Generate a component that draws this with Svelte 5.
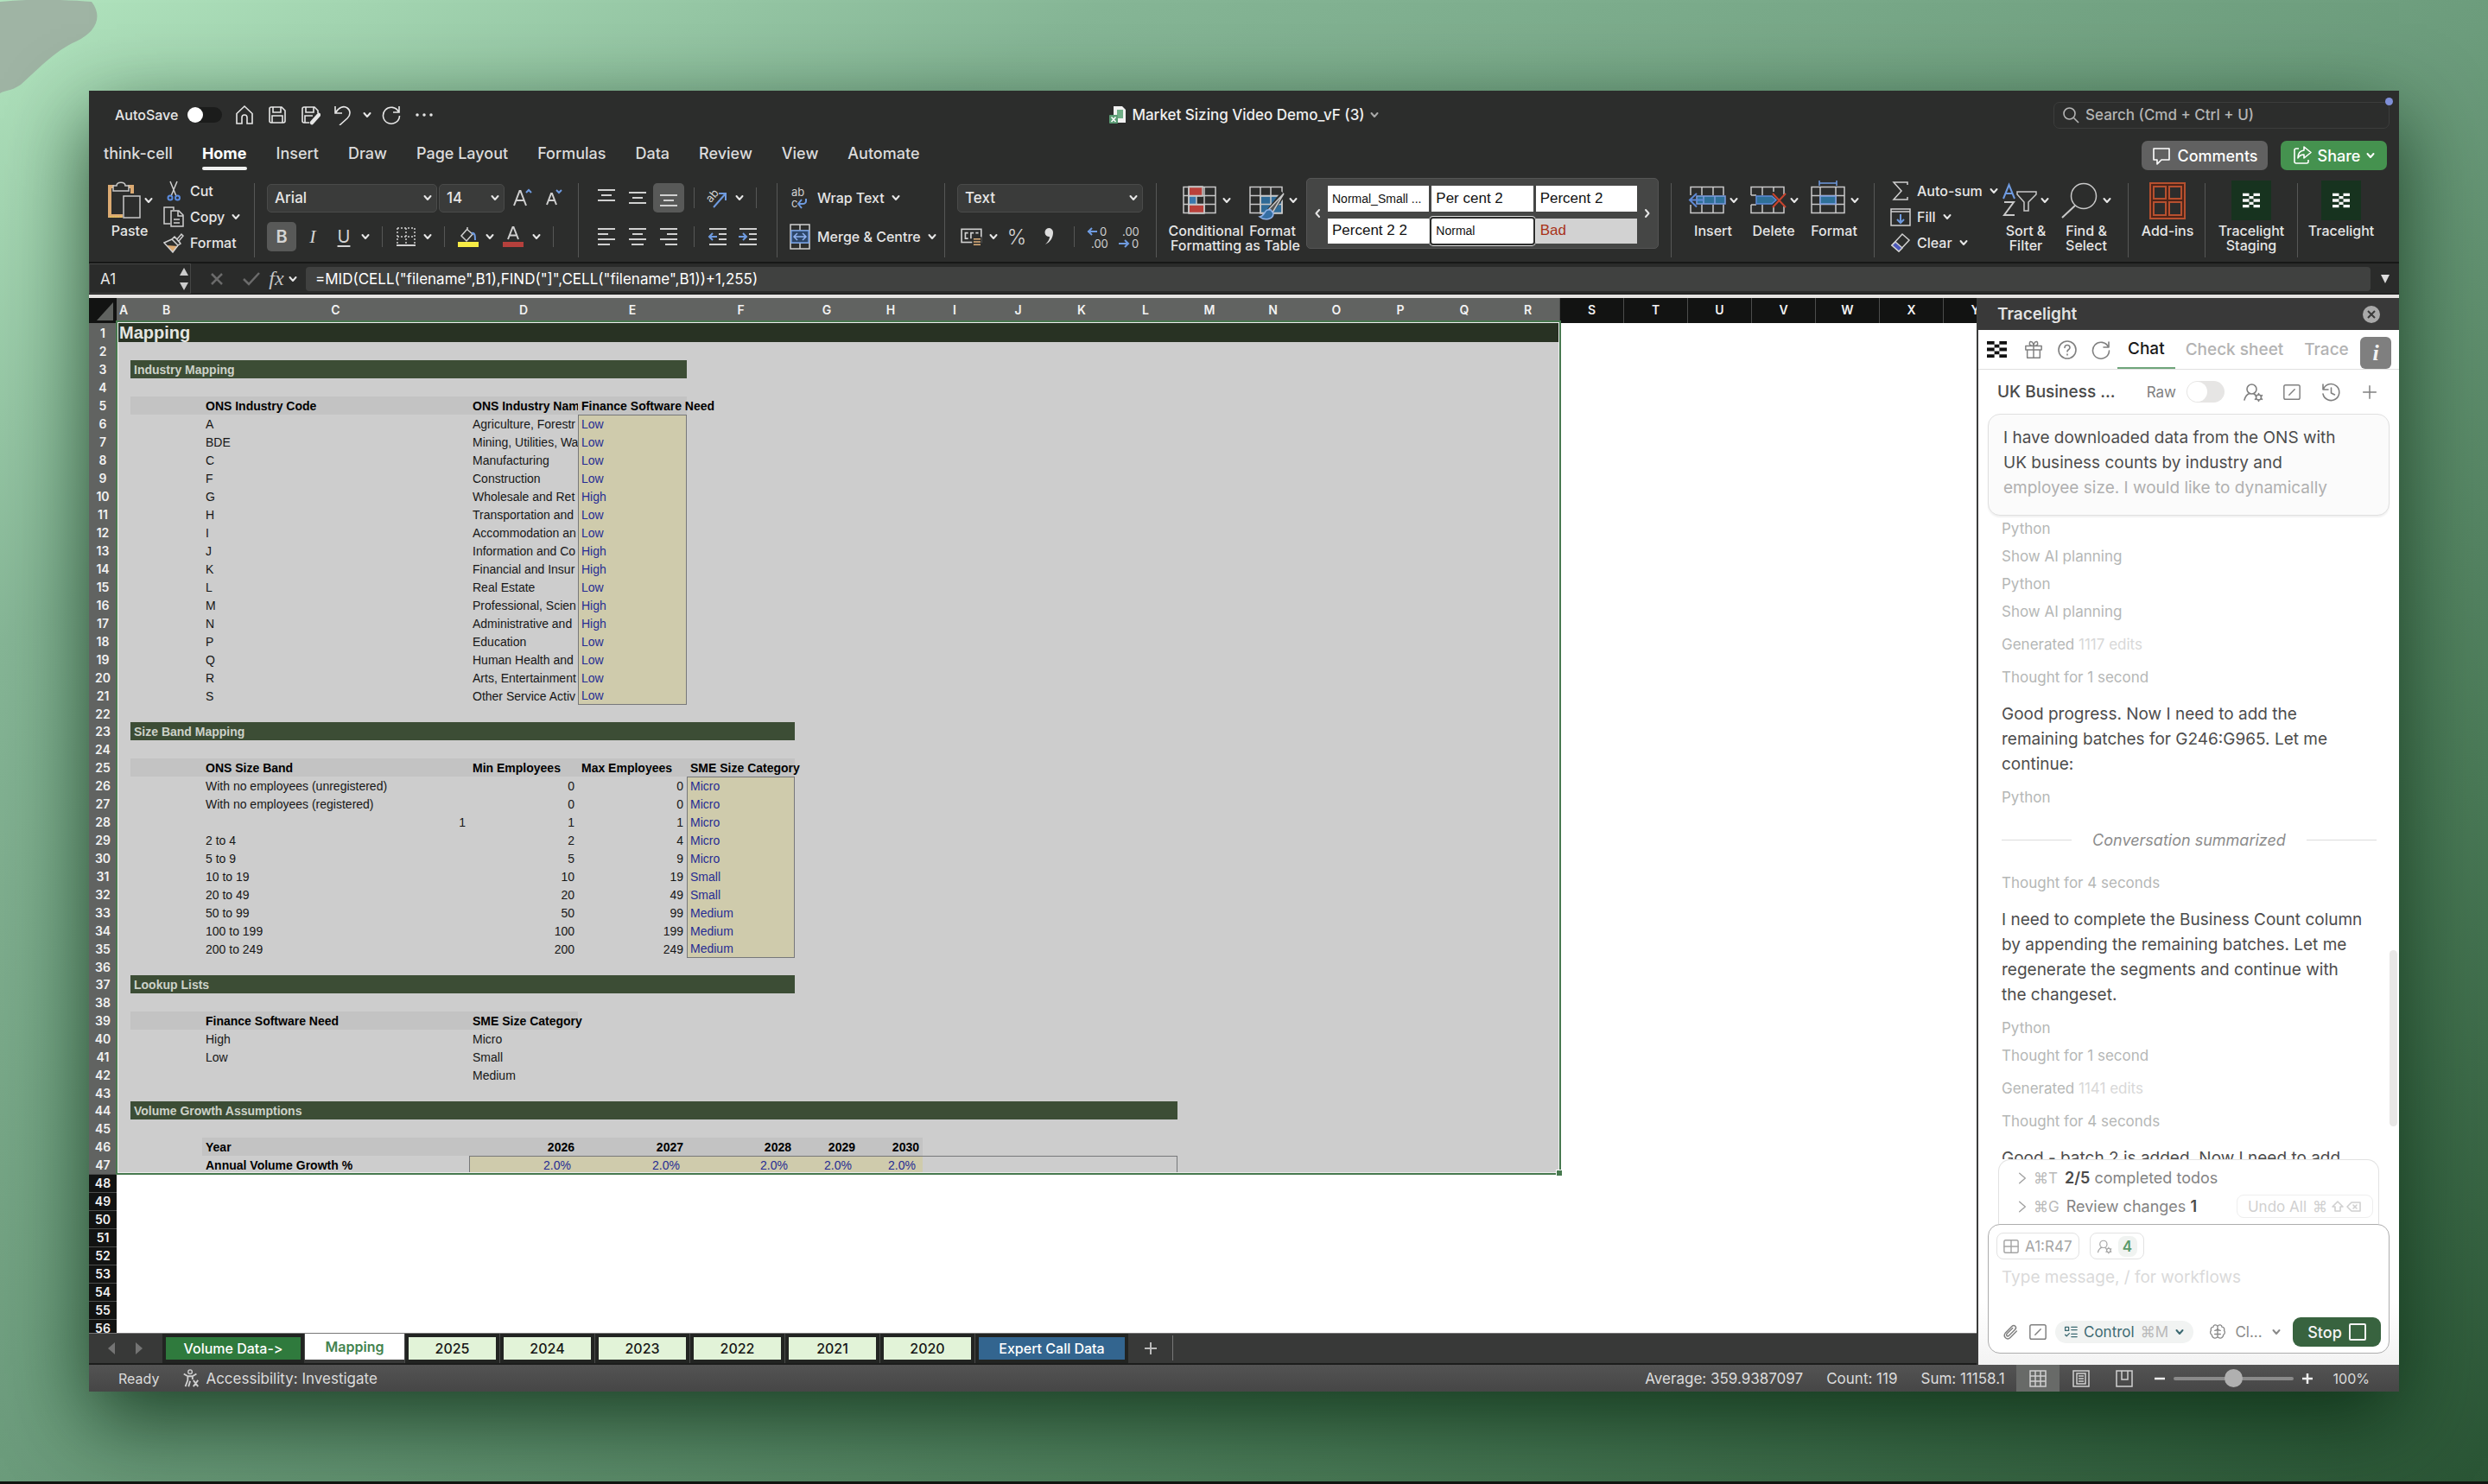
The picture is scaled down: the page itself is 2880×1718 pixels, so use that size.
<script>
  const letters = 'ABCDEFGHIJKLMNOPQRSTUVWXY'.split('');
  const narrow = ['J', 'N', 'R'];
  const colClass = (l) => ('ABCDEF'.includes(l) ? 'col-' + l.toLowerCase() : narrow.includes(l) ? 'col-slim' : 'col-std');

  const rows = [];
  for (let i = 1; i <= 56; i++) rows.push({ n: i, cells: {} });
  const put = (row, col, text, cls = '') => (rows[row - 1].cells[col] = { text, cls });
  const fill = (row, from, to, cls) => {
    for (let i = letters.indexOf(from); i <= letters.indexOf(to); i++) {
      const l = letters[i];
      const old = rows[row - 1].cells[l];
      put(row, l, old ? old.text : '', ((old ? old.cls : '') + ' ' + cls).trim());
    }
  };

  put(1, 'A', 'Mapping', 'sheet-title');
  fill(1, 'A', 'R', 'top-bar');

  const section = (row, text, to) => {
    put(row, 'B', text, 'bold');
    fill(row, 'B', to, 'section');
  };
  section(3, 'Industry Mapping', 'E');
  section(23, 'Size Band Mapping', 'F');
  section(37, 'Lookup Lists', 'F');
  section(44, 'Volume Growth Assumptions', 'L');

  put(5, 'C', 'ONS Industry Code', 'bold');
  put(5, 'D', 'ONS Industry Nam', 'bold clip');
  put(5, 'E', 'Finance Software Need', 'bold');
  fill(5, 'B', 'E', 'band');

  const industries = [
    ['A', 'Agriculture, Forestr', 'Low'],
    ['BDE', 'Mining, Utilities, Wa', 'Low'],
    ['C', 'Manufacturing', 'Low'],
    ['F', 'Construction', 'Low'],
    ['G', 'Wholesale and Ret', 'High'],
    ['H', 'Transportation and', 'Low'],
    ['I', 'Accommodation an', 'Low'],
    ['J', 'Information and Co', 'High'],
    ['K', 'Financial and Insur', 'High'],
    ['L', 'Real Estate', 'Low'],
    ['M', 'Professional, Scien', 'High'],
    ['N', 'Administrative and', 'High'],
    ['P', 'Education', 'Low'],
    ['Q', 'Human Health and', 'Low'],
    ['R', 'Arts, Entertainment', 'Low'],
    ['S', 'Other Service Activ', 'Low']
  ];
  industries.forEach(([code, name, need], i) => {
    const edge = i === 0 ? ' box-top' : i === industries.length - 1 ? ' box-bottom' : '';
    put(6 + i, 'C', code);
    put(6 + i, 'D', name, 'clip');
    put(6 + i, 'E', need, 'entry box-side' + edge);
  });

  put(25, 'C', 'ONS Size Band', 'bold');
  put(25, 'D', 'Min Employees', 'bold');
  put(25, 'E', 'Max Employees', 'bold');
  put(25, 'F', 'SME Size Category', 'bold');
  fill(25, 'B', 'F', 'band');
  const bands = [
    ['With no employees (unregistered)', '0', '0', 'Micro'],
    ['With no employees (registered)', '0', '0', 'Micro'],
    ['1', '1', '1', 'Micro'],
    ['2 to 4', '2', '4', 'Micro'],
    ['5 to 9', '5', '9', 'Micro'],
    ['10 to 19', '10', '19', 'Small'],
    ['20 to 49', '20', '49', 'Small'],
    ['50 to 99', '50', '99', 'Medium'],
    ['100 to 199', '100', '199', 'Medium'],
    ['200 to 249', '200', '249', 'Medium']
  ];
  bands.forEach(([band, min, max, cat], i) => {
    const edge = i === 0 ? ' box-top' : i === bands.length - 1 ? ' box-bottom' : '';
    put(26 + i, 'C', band, band === '1' ? 'num' : '');
    put(26 + i, 'D', min, 'num');
    put(26 + i, 'E', max, 'num');
    put(26 + i, 'F', cat, 'entry box-side' + edge);
  });

  put(39, 'C', 'Finance Software Need', 'bold');
  put(39, 'D', 'SME Size Category', 'bold');
  fill(39, 'B', 'D', 'band');
  put(40, 'C', 'High');
  put(40, 'D', 'Micro');
  put(41, 'C', 'Low');
  put(41, 'D', 'Small');
  put(42, 'D', 'Medium');

  put(46, 'C', 'Year', 'bold');
  put(47, 'C', 'Annual Volume Growth %', 'bold');
  ['D', 'E', 'F', 'G', 'H'].forEach((l, i) => {
    put(46, l, String(2026 + i), 'bold num');
    put(47, l, '2.0%', 'entry percent box-top' + (l === 'D' ? ' box-left' : ''));
  });
  fill(46, 'C', 'H', 'band');
  fill(47, 'I', 'L', 'box-top');
  fill(47, 'L', 'L', 'box-right');

  const spacer = [22, 36, 43];
  const menuTabs = ['think-cell', 'Home', 'Insert', 'Draw', 'Page Layout', 'Formulas', 'Data', 'Review', 'View', 'Automate'];
  const years = ['2025', '2024', '2023', '2022', '2021', '2020'];
  const styles = [
    ['Normal_Small ...', 'small'],
    ['Per cent 2', ''],
    ['Percent 2', ''],
    ['Percent 2 2', ''],
    ['Normal', 'small chosen'],
    ['Bad', 'bad']
  ];
  let autosave = $state(false);
  let raw = $state(false);
</script>

{#snippet chev()}
  <svg class="chev" viewBox="0 0 12 12" width="12" height="12"><path d="M2.500 4l3.500 4 3.500-4" /></svg>
{/snippet}

{#snippet grid(kind)}
  <svg class="big" viewBox="0 0 44 46" width="44" height="46">
    {#if kind === 'cf'}
      <rect x="9" y="7" width="16" height="11" fill="#b9413b" /><rect x="9" y="18" width="9" height="10" fill="#3b78ad" /><rect x="9" y="28" width="18" height="10" fill="#b9413b" />
      <path d="M3 7.500h37v30H3zM3 17.500h37M3 27.500h37M9 7v31M27 7v31" />
    {:else if kind === 'ft'}
      <rect x="15" y="18" width="25" height="20" fill="#2f6a96" />
      <path d="M3 7.500h37v30H3zM3 17.500h37M3 27.500h37M15 7v31M27 7v31" />
      <path d="M42 15L26 35" stroke="#2c2d2c" stroke-width="7" /><path d="M42 15L25 33l4 4z" fill="#555" />
      <path d="M27 34c-8-2-6 7-13 8 6 5 16 3 16-4z" fill="#356ea3" stroke="#8fb2e8" />
    {:else if kind === 'insert'}
      <path d="M3 17V7.500h38V17M16 7v10M29 7v10M3 28v9.500h38V28M16 28v10M29 28v10" />
      <rect x="10" y="18" width="33" height="9" fill="#2f7098" stroke="#7d9de0" /><path d="M18 18v9M31 18v9" stroke="#7d9de0" /><path d="M18 22.500H2M10 15l-8 7.500 8 8" stroke="#5f8ad6" stroke-width="2" />
    {:else if kind === 'delete'}
      <path d="M3 17V7.500h38V16M16 7v10M29 7v6M3 17h6M3 28h6M3 28v9.500h38V30M16 28v10M29 30v8" />
      <path d="M9 18h18l5 4.500-5 4.500H9z" fill="#2f7098" stroke="#5f8ad6" /><path d="M28 15l15 16M43 15L28 31" stroke="#c9452f" stroke-width="2" />
    {:else}
      <path d="M3 7.500h38v30H3zM3 17.500h38M3 27.500h38M13 7v31M31 7v31" />
      <rect x="13" y="18" width="18" height="9" fill="#2f7098" stroke="#7d9de0" /><path d="M12 3h20M12 0v6M32 0v6" stroke="#6f9be0" />
    {/if}
  </svg>
{/snippet}

{#snippet lines(offs)}
  <svg class="ic" viewBox="0 0 24 24" width="24" height="24">
    <path class="l2" d={offs} />
  </svg>
{/snippet}

{#snippet checker(size)}
  <svg viewBox="0 0 24 20" width={size} height={size} class="checker">
    <path d="M0 0h9v4H0zM15 0h9v4h-9zM9 4h6v4H9zM0 8h9v4H0zM15 8h9v4h-9zM9 12h6v4H9zM0 16h9v4H0zM15 16h9v4h-9z" />
  </svg>
{/snippet}

{#snippet person()}
  <svg class="pi" viewBox="0 0 24 24" width="24" height="24"><circle cx="10.500" cy="8.500" r="5.500" /><path d="M2 21c1-4 3-6.500 6-7.500M13 14l1.500.800" /><circle cx="18.500" cy="18" r="3" /><path d="M18.500 13.500v1.500M18.500 21v1.500M14.500 15.700l1.300.800M21.200 19.500l1.300.800M14.500 20.300l1.300-.800M21.200 16.500l1.300-.800" /></svg>
{/snippet}

{#snippet slash()}
  <svg class="pi" viewBox="0 0 24 24" width="22" height="22"><rect x="2" y="3" width="20" height="18" rx="2" /><path d="M8.500 15.500l7-7" /></svg>
{/snippet}

<div class="page">
  <svg class="smudge" viewBox="0 0 114 110" width="114" height="110"><path d="M0 2c40-4 80-2 106 0 14 18 4 36-18 46C64 58 40 84 24 98 12 106 6 104 0 108z" /></svg>

  <main class="window">
    <header class="titlebar">
      <div class="quick">
        <label class="autosave">AutoSave<input type="checkbox" bind:checked={autosave} /><span class="knob"></span></label>
        <button aria-label="Home"><svg viewBox="0 0 24 24" width="24" height="24"><path d="M3 10.500L12 2l9 8.500V22h-6v-7a3 3 0 0 0-6 0v7H3z" /></svg></button>
        <button aria-label="Save"><svg viewBox="0 0 24 24" width="24" height="24"><path d="M3 5a2 2 0 0 1 2-2h12l4 4v12a2 2 0 0 1-2 2H5a2 2 0 0 1-2-2zM7 3v6h9V3M6 21v-8h12v8" /></svg></button>
        <button aria-label="Save as"><svg viewBox="0 0 24 24" width="24" height="24"><path d="M11 21H5a2 2 0 0 1-2-2V5a2 2 0 0 1 2-2h12l4 4v3M7 3v6h9V3M6 21v-8h9" /><path d="M22 12l-8 9" stroke-width="4.500" stroke-linecap="round" /></svg></button>
        <button aria-label="Undo"><svg viewBox="0 0 24 24" width="24" height="24"><path d="M3 2v8h8M3.500 9.500C7 3 13 1 17 4s4 8 0 12l-9 8" /></svg></button>
        <button aria-label="Undo history" class="slim">{@render chev()}</button>
        <button aria-label="Redo"><svg viewBox="0 0 24 24" width="24" height="24"><path d="M21 2v7h-7M20.500 8.500A9.500 9.500 0 1 0 21.500 13" /></svg></button>
        <button aria-label="More commands"><svg viewBox="0 0 24 24" width="24" height="24"><path d="M4 12h.010M12 12h.010M20 12h.010" stroke-width="3.500" stroke-linecap="round" /></svg></button>
      </div>
      <div class="doc">
        <svg viewBox="0 0 22 22" width="22" height="22"><path d="M6 1h10l4 4v15H6z" fill="#f2f2f2" /><path d="M10 5h7v10h-7z" fill="#6fae86" /><rect x="1" y="11" width="10" height="10" rx="1" fill="#5a9c74" /><path d="M3.500 13.500l5 5.500M8.500 13.500l-5 5.500" stroke="#fff" stroke-width="1.500" /></svg>
        <span>Market Sizing Video Demo_vF (3)</span>
        {@render chev()}
      </div>
      <label class="search">
        <svg viewBox="0 0 20 20" width="20" height="20"><circle cx="8.500" cy="8.500" r="6.500" /><path d="M13.500 13.500L19 19" /></svg>
        <input type="text" placeholder="Search (Cmd + Ctrl + U)" aria-label="Search" />
        <span class="dot"></span>
      </label>
    </header>

    <nav class="menu">
      {#each menuTabs as t}
        <button class:active={t === 'Home'}>{t}</button>
      {/each}
      <div class="menu-actions">
        <button class="pill grey"><svg viewBox="0 0 24 24" width="24" height="24"><path d="M3 4h18v13h-9l-5 5v-5H3z" stroke-linejoin="round" /></svg>Comments</button>
        <button class="pill green"><svg viewBox="0 0 24 24" width="24" height="24"><path d="M8 4H5a2 2 0 0 0-2 2v13a2 2 0 0 0 2 2h12a2 2 0 0 0 2-2v-2M14 2l8 6.500-8 6.500v-4c-4 0-6 2-7 4 0-5 2-8.500 7-9z" stroke-linejoin="round" /></svg>Share {@render chev()}</button>
      </div>
    </nav>

    <section class="ribbon" aria-label="Ribbon">
      <div class="group g-clip">
        <button class="large w62">
          <span class="pic"><svg class="big" viewBox="0 0 40 46" width="40" height="46"><path d="M4 7h5M25 7h5v8M4 5v36h15" stroke="#dcaa72" stroke-width="4" /><path d="M4 42h15" stroke="#e9d24a" stroke-width="1" stroke-dasharray="2 1" /><path d="M8 12V6h4c0-5 10-5 10 0h4v6z" fill="#2c2d2c" /><rect x="20" y="18" width="19" height="25" fill="#2c2d2c" /></svg>{@render chev()}</span>
          <span>Paste</span>
        </button>
        <div class="stack">
          <button><svg class="ic" viewBox="0 0 24 24" width="24" height="24"><path d="M8 1l7 17M16 1L9 18" /><circle cx="8" cy="20" r="2.500" stroke="#5b8de0" stroke-width="2" /><circle cx="16.500" cy="20" r="2.500" stroke="#5b8de0" stroke-width="2" /></svg>Cut</button>
          <button><svg class="ic" viewBox="0 0 24 24" width="24" height="24"><path d="M8 20H1V1h11v3M9 5h9l5 5v13H9zM17 5v6h6M12 15h7M12 19h7" /></svg>Copy {@render chev()}</button>
          <button><svg class="ic" viewBox="0 0 24 24" width="24" height="24"><path d="M4 15l7 8 6-7z" fill="#dcaa72" stroke="none" /><path d="M1 12l9-4 7 7-6 8zM10 8l3-3 3 3 5-6 2 2-5 6 2 3-3 2M13 5l7 8" /></svg>Format</button>
        </div>
      </div>

      <div class="group g-font">
        <div class="line">
          <span class="drop w197"><select aria-label="Font"><option>Arial</option></select>{@render chev()}</span>
          <span class="drop w76"><select aria-label="Font size"><option>14</option></select>{@render chev()}</span>
          <button class="w38" aria-label="Grow font"><svg class="ic" viewBox="0 0 24 24" width="24" height="24"><path d="M2 21L8.500 4h1L16 21M4.500 15h9" stroke-width="2" /><path d="M16 6l3-3 3 3" stroke="#6f9be0" stroke-width="2" /></svg></button>
          <button class="w34" aria-label="Shrink font"><svg class="ic" viewBox="0 0 24 24" width="24" height="24"><path d="M4 20L9 7h1l5 13M6 15h7" stroke-width="2" /><path d="M15 3l3 3 3-3" stroke="#6f9be0" stroke-width="2" /></svg></button>
        </div>
        <div class="line">
          <button class="w34 on glyph b">B</button>
          <button class="w38 glyph i">I</button>
          <button class="w34 glyph u">U</button>
          <button class="w16" aria-label="Underline options">{@render chev()}</button>
          <i class="bar w22"></i>
          <button class="w34" aria-label="Borders"><svg class="ic" viewBox="0 0 24 24" width="24" height="24"><path d="M2 2h20M2 12h20M2 2v18M12 2v18M22 2v18" stroke-dasharray="2 2" /><path d="M1 22h22" stroke-width="2" /></svg></button>
          <button class="w16" aria-label="Border options">{@render chev()}</button>
          <i class="bar w22"></i>
          <button class="w34" aria-label="Fill colour"><svg class="ic" viewBox="0 0 24 24" width="24" height="24"><path d="M10 3l7 6-7 8-6-6 7-8V1" /><path d="M16 8c4-1 4 4 4 8" stroke="#6f9be0" stroke-width="2" /><path d="M0 18h24v6H0z" fill="#f7ec45" stroke="none" /></svg></button>
          <button class="w16" aria-label="Fill options">{@render chev()}</button>
          <button class="w38" aria-label="Font colour"><svg class="ic" viewBox="0 0 24 24" width="24" height="24"><path d="M6 15l5.500-14h1L18 15M8 10.500h8" stroke-width="2" /><path d="M0 18h24v6H0z" fill="#b5403c" stroke="none" /></svg></button>
          <button class="w16" aria-label="Font colour options">{@render chev()}</button>
          <i class="bar w22"></i>
        </div>
      </div>

      <div class="group g-align">
        <div class="line">
          <button class="w36" aria-label="Top align">{@render lines('M2 3h20M6 9h12M2 15h20')}</button>
          <button class="w36" aria-label="Middle align">{@render lines('M2 6h20M6 12h12M2 18h20')}</button>
          <button class="w36 on" aria-label="Bottom align">{@render lines('M2 9h20M6 15h12M2 21h20')}</button>
          <i class="bar w22"></i>
          <button class="w34" aria-label="Orientation"><svg class="ic" viewBox="0 0 26 26" width="26" height="26"><text x="0" y="15" class="tiny" transform="rotate(-50 7 12)">ab</text><path d="M8 24L22 8M14 8h8v8" stroke="#6f9be0" stroke-width="2" /></svg></button>
          <button class="w16" aria-label="Orientation options">{@render chev()}</button>
          <i class="bar w22"></i>
        </div>
        <div class="line">
          <button class="w36" aria-label="Align left">{@render lines('M2 3h20M2 9h12M2 15h20M2 21h14')}</button>
          <button class="w36" aria-label="Centre">{@render lines('M2 3h20M6 9h12M2 15h20M5 21h14')}</button>
          <button class="w36" aria-label="Align right">{@render lines('M2 3h20M10 9h12M2 15h20M8 21h14')}</button>
          <i class="bar w22"></i>
          <button class="w34" aria-label="Decrease indent"><svg class="ic" viewBox="0 0 24 24" width="24" height="24"><path class="l2" d="M2 3h20M13 9h9M13 15h9M2 21h20" /><path d="M11 12H3M6 8l-4 4 4 4" stroke="#6f9be0" stroke-width="2" /></svg></button>
          <button class="w36" aria-label="Increase indent"><svg class="ic" viewBox="0 0 24 24" width="24" height="24"><path class="l2" d="M2 3h20M13 9h9M13 15h9M2 21h20" /><path d="M1 12h8M6 8l4 4-4 4" stroke="#6f9be0" stroke-width="2" /></svg></button>
        </div>
      </div>

      <div class="group g-wrap">
        <button class="item"><svg class="ic" viewBox="0 0 26 26" width="26" height="26"><text x="3" y="11" class="tiny">ab</text><text x="3" y="24" class="tiny">c</text><path d="M20 14v3c0 3-2 3-8 3M15 15l-4 5 4 5" stroke="#6f9be0" stroke-width="2" /></svg>Wrap Text {@render chev()}</button>
        <button class="item"><svg class="ic" viewBox="0 0 26 30" width="26" height="30"><path d="M2 1h22v28H2zM2 8h22M2 22h22M13 1v7M13 22v7" /><path d="M3 8h20v14H3z" stroke="#6f9be0" fill="#2d4668" /><path d="M6 15h14M10 11l-4 4 4 4M16 11l4 4-4 4" stroke="#8fb2f0" /></svg>Merge &amp; Centre {@render chev()}</button>
      </div>

      <div class="group g-num">
        <div class="line"><span class="drop w215"><select aria-label="Number format"><option>Text</option></select>{@render chev()}</span></div>
        <div class="line">
          <button class="w34" aria-label="Currency"><svg class="ic" viewBox="0 0 24 24" width="26" height="26"><rect x="1" y="4" width="21" height="14" /><path d="M8 8H5v6h3M14 8h-3v6M16 8h3" /><path d="M13 13h9v9h-9z" fill="#e0b27c" stroke="#2c2d2c" /><path d="M13 16h9M13 19h9" stroke="#2c2d2c" /></svg></button>
          <button class="w16" aria-label="Currency options">{@render chev()}</button>
          <button class="w38 glyph pct">%</button>
          <button class="w36" aria-label="Comma style"><svg viewBox="0 0 24 24" width="24" height="24"><path d="M12 2a5 5 0 0 1 5 5c0 6-3 11-9 14 3-3 5-6 5-9a5 5 0 1 1-1-10z" fill="#ddd" /></svg></button>
          <i class="bar w22"></i>
          <button class="w36" aria-label="Increase decimal"><svg class="ic" viewBox="0 0 28 28" width="28" height="28"><text x="15" y="13" class="tiny">0</text><text x="5" y="27" class="tiny">.00</text><path d="M12 8H1M6 4L2 8l4 4" stroke="#6f9be0" stroke-width="2" /></svg></button>
          <button class="w36" aria-label="Decrease decimal"><svg class="ic" viewBox="0 0 28 28" width="28" height="28"><text x="5" y="13" class="tiny">.00</text><text x="16" y="27" class="tiny">0</text><path d="M1 22h11M8 18l4 4-4 4" stroke="#6f9be0" stroke-width="2" /></svg></button>
        </div>
      </div>

      <div class="group g-style">
        <button class="large w84"><span class="pic">{@render grid('cf')}{@render chev()}</span><span>Conditional<br />Formatting</span></button>
        <button class="large w70"><span class="pic">{@render grid('ft')}{@render chev()}</span><span>Format<br />as Table</span></button>
        <div class="gallery">
          <button class="arrow" aria-label="Previous styles"><svg viewBox="0 0 12 12" width="12" height="12" class="chev"><path d="M8 2L4.500 6 8 10" /></svg></button>
          <div class="swatches">
            {#each styles as [name, cls]}<button class="swatch {cls}">{name}</button>{/each}
          </div>
          <button class="arrow" aria-label="Next styles"><svg viewBox="0 0 12 12" width="12" height="12" class="chev"><path d="M4 2l3.500 4L4 10" /></svg></button>
        </div>
      </div>

      <div class="group g-cells">
        <button class="large w70"><span class="pic">{@render grid('insert')}{@render chev()}</span><span>Insert</span></button>
        <button class="large w70"><span class="pic">{@render grid('delete')}{@render chev()}</span><span>Delete</span></button>
        <button class="large w70"><span class="pic">{@render grid('format')}{@render chev()}</span><span>Format</span></button>
      </div>

      <div class="group g-edit">
        <div class="stack">
          <button><svg class="ic" viewBox="0 0 24 24" width="24" height="24"><path d="M20 5V2H4l9 10-9 10h16v-3" /></svg>Auto-sum {@render chev()}</button>
          <button><svg class="ic" viewBox="0 0 24 24" width="24" height="24"><path d="M1 3h22v19H1zM1 6h22" /><path d="M12 9v10M8 15l4 4 4-4" stroke="#6f9be0" stroke-width="2" /></svg>Fill {@render chev()}</button>
          <button><svg class="ic" viewBox="0 0 24 24" width="24" height="24"><path d="M14 2l8 7-12 13-8-7z" /><path d="M6 11l8 7-4 4-8-7z" fill="#4b57b8" /></svg>Clear {@render chev()}</button>
        </div>
        <button class="large w70"><span class="pic"><svg class="big" viewBox="0 0 40 46" width="40" height="46"><path d="M1 21L7.500 5 14 21M3.500 15h8" stroke="#6f9be0" stroke-width="2" /><path d="M2 25h11L2 40h12" stroke-width="2" /><path d="M17 13h22v3l-9 9v10h-5V25l-8-9z" /></svg>{@render chev()}</span><span>Sort &amp;<br />Filter</span></button>
        <button class="large w70"><span class="pic"><svg class="big" viewBox="0 0 44 46" width="44" height="46"><circle cx="26" cy="18" r="14.500" /><path d="M16 29L1 43" stroke-width="2" /></svg>{@render chev()}</span><span>Find &amp;<br />Select</span></button>
      </div>

      <div class="group g-add">
        <button class="large w80"><span class="pic"><svg viewBox="0 0 44 46" width="44" height="46"><g fill="#4d2418" stroke="#b6502f" stroke-width="2"><rect x="2" y="3" width="40" height="41" /><g fill="#2c2d2c"><rect x="6" y="7" width="14" height="14" /><rect x="24" y="7" width="14" height="14" /><rect x="6" y="25" width="14" height="15" /><rect x="24" y="25" width="14" height="15" /></g></g></svg></span><span>Add-ins</span></button>
      </div>
      <div class="group g-tl1">
        <button class="large w80"><span class="pic"><span class="tile">{@render checker(20)}</span></span><span>Tracelight<br />Staging</span></button>
      </div>
      <div class="group g-tl2">
        <button class="large w80"><span class="pic"><span class="tile">{@render checker(20)}</span></span><span>Tracelight</span></button>
      </div>
    </section>

    <div class="formula">
      <div class="namebox"><input type="text" value="A1" aria-label="Name box" />
        <svg viewBox="0 0 12 28" width="12" height="28"><path d="M1 10l5-9 5 9zM1 18l5 9 5-9z" fill="#ccc" /></svg>
      </div>
      <button class="cancel" aria-label="Cancel"><svg viewBox="0 0 16 16" width="16" height="16"><path d="M2 2l12 12M14 2L2 14" stroke="#6b6b6b" stroke-width="2.500" /></svg></button>
      <button class="w22" aria-label="Enter"><svg viewBox="0 0 20 16" width="20" height="16"><path d="M1 8l6 6L19 1" stroke="#6b6b6b" stroke-width="2.500" fill="none" /></svg></button>
      <button class="fx" aria-label="Insert function"><em>fx</em>{@render chev()}</button>
      <input class="fxinput" type="text" aria-label="Formula" value={'=MID(CELL("filename",B1),FIND("]",CELL("filename",B1))+1,255)'} />
      <button class="expand" aria-label="Expand formula bar"><svg viewBox="0 0 12 12" width="12" height="12"><path d="M1 1h10L6 11z" fill="#ddd" /></svg></button>
    </div>

    <div class="work">
      <div class="left">
        <div class="sheet">
          <table>
            <colgroup>
              <col class="col-num" />
              {#each letters as l}<col class={colClass(l)} />{/each}
            </colgroup>
            <thead>
              <tr>
                <th class="corner"><svg viewBox="0 0 32 29" width="32" height="29"><path d="M28 5v21H9z" fill="#5f625f" /></svg></th>
                {#each letters as l, i}<th scope="col" class:sel={i < 18}>{l}</th>{/each}
              </tr>
            </thead>
            <tbody>
              {#each rows as r}
                <tr class:first={r.n === 1} class:spacer={spacer.includes(r.n)} class:inside={r.n <= 47}>
                  <th scope="row">{r.n}</th>
                  {#each letters as l}
                    <td class={r.cells[l]?.cls}>{r.cells[l]?.text ?? ''}</td>
                  {/each}
                </tr>
              {/each}
            </tbody>
          </table>
          <div class="selection"><span></span></div>
        </div>

        <div class="sheets">
          <button class="nav" aria-label="Previous sheet"><svg viewBox="0 0 10 14" width="10" height="14"><path d="M9 0v14L1 7z" /></svg></button>
          <button class="nav" aria-label="Next sheet"><svg viewBox="0 0 10 14" width="10" height="14"><path d="M1 0v14l8-7z" /></svg></button>
          <button class="tab volume"><span>Volume Data-&gt;</span></button>
          <button class="tab current">Mapping</button>
          {#each years as y}<button class="tab year"><span>{y}</span></button>{/each}
          <button class="tab expert"><span>Expert Call Data</span></button>
          <button class="plus" aria-label="Add sheet"><svg viewBox="0 0 14 14" width="14" height="14"><path d="M7 0v14M0 7h14" stroke="#bbb" stroke-width="2" /></svg></button>
        </div>
      </div>

      <aside class="panel">
        <div class="panel-title"><h2>Tracelight</h2><button aria-label="Close"><svg viewBox="0 0 20 20" width="20" height="20"><circle cx="10" cy="10" r="10" fill="#a9a9a9" /><path d="M6 6l8 8M14 6l-8 8" stroke="#393939" stroke-width="2" /></svg></button></div>
        <div class="panel-tabs">
          {@render checker(23)}
          <button class="picon" aria-label="Gifts"><svg class="pi" viewBox="0 0 24 24" width="22" height="22"><path d="M2 7h20v5H2zM4 12v10h16V12M12 7v15M12 7C9 7 6 6 7 3s5-1 5 4c0-5 4-7 5-4s-2 4-5 4" /></svg></button>
          <button class="picon" aria-label="Help"><svg class="pi" viewBox="0 0 24 24" width="24" height="24"><circle cx="12" cy="12" r="10" /><path d="M9 9.500c0-4 6-4 6 0 0 2.500-3 2-3 4.500M12 17v1" /></svg></button>
          <button class="picon" aria-label="Refresh"><svg class="pi" viewBox="0 0 24 24" width="24" height="24"><path d="M21 3v6h-6M20.500 8.500A9.500 9.500 0 1 0 21.500 13" /></svg></button>
          <button class="ptab chat">Chat</button>
          <button class="ptab">Check sheet</button>
          <button class="ptab">Trace</button>
          <button class="info" aria-label="Information"><em>i</em></button>
        </div>
        <div class="panel-head">
          <h3>UK Business ...</h3>
          <label class="raw">Raw<input type="checkbox" bind:checked={raw} /><span></span></label>
          <button class="picon" aria-label="Profile settings">{@render person()}</button>
          <button class="picon" aria-label="Workflows">{@render slash()}</button>
          <button class="picon" aria-label="History"><svg class="pi" viewBox="0 0 24 24" width="24" height="24"><path d="M3 3v6h6M3.500 8.500A9.500 9.500 0 1 1 3 14M12.500 7v6l4 2" /></svg></button>
          <button class="picon" aria-label="New chat"><svg class="pi" viewBox="0 0 24 24" width="22" height="22"><path d="M12 4v16M4 12h16" /></svg></button>
        </div>
        <div class="prompt">I have downloaded data from the ONS with<br />UK business counts by industry and<br /><span>employee size. I would like to dynamically</span></div>
        <div class="chatlog">
          <div class="step">Python</div>
          <div class="step">Show AI planning</div>
          <div class="step">Python</div>
          <div class="step">Show AI planning</div>
          <div class="step tall edits">Generated <span>1117 edits</span></div>
          <div class="step tall">Thought for 1 second</div>
          <p>Good progress. Now I need to add the<br />remaining batches for G246:G965. Let me<br />continue:</p>
          <div class="step">Python</div>
          <div class="summary">Conversation summarized</div>
          <div class="step tall">Thought for 4 seconds</div>
          <p>I need to complete the Business Count column<br />by appending the remaining batches. Let me<br />regenerate the segments and continue with<br />the changeset.</p>
          <div class="step">Python</div>
          <div class="step">Thought for 1 second</div>
          <div class="step tall edits">Generated <span>1141 edits</span></div>
          <div class="step tall">Thought for 4 seconds</div>
          <p>Good - batch 2 is added. Now I need to add</p>
          <span class="thumb"></span>
        </div>
        <div class="todo">
          <button><svg class="pi" viewBox="0 0 12 16" width="10" height="14"><path d="M2 1l8 7-8 7" /></svg><kbd>⌘T</kbd><span><b>2/5</b> completed todos</span></button>
          <button><svg class="pi" viewBox="0 0 12 16" width="10" height="14"><path d="M2 1l8 7-8 7" /></svg><kbd>⌘G</kbd><span>Review changes <b>1</b></span></button>
          <button class="undo">Undo All <kbd>⌘</kbd><svg class="pi" viewBox="0 0 36 16" width="36" height="16"><path d="M8 2l6 6h-3v5H5V8H2zM24 3h10v10H24l-5-5zM26 6l4 4M30 6l-4 4" /></svg></button>
        </div>
        <form class="composer" onsubmit={(e) => e.preventDefault()}>
          <div class="chips">
            <button type="button" class="chip"><svg class="pi" viewBox="0 0 20 20" width="18" height="18"><rect x="1" y="2" width="18" height="16" rx="2" /><path d="M1 10h18M10 2v16" /></svg>A1:R47</button>
            <button type="button" class="chip">{@render person()}<b>4</b></button>
          </div>
          <textarea rows="1" aria-label="Message" placeholder="Type message, / for workflows"></textarea>
          <div class="tools">
            <button type="button" class="picon" aria-label="Attach"><svg class="pi" viewBox="0 0 24 24" width="22" height="22"><path d="M20 11l-8 8c-4 4-10-1-6-6l8-8c3-3 7 1 4 4l-8 8c-2 1-4-1-2-3l7-7" /></svg></button>
            <button type="button" class="picon" aria-label="Workflows">{@render slash()}</button>
            <button type="button" class="control"><svg class="pi" viewBox="0 0 20 20" width="16" height="16"><path d="M2 3h5v5H2zM2 14l2 2 4-4M11 3h8M11 7h8M11 13h8M11 17h8" /></svg>Control <kbd>⌘M</kbd>{@render chev()}</button>
            <button type="button" class="model"><svg class="pi" viewBox="0 0 24 24" width="20" height="20"><path d="M12 4c-2-3-6-2-6 1-3 0-4 3-3 5-2 2-1 5 1 6 0 4 5 6 8 3 3 3 8 1 8-3 2-1 3-4 1-6 1-2 0-5-3-5 0-3-4-4-6-1zM12 4v15M8 10c3 0 4-1 4-3M16 10c-3 0-4-1-4-3M8 15h8" /></svg>Cl... {@render chev()}</button>
            <button type="submit" class="stop">Stop<svg viewBox="0 0 20 20" width="20" height="20"><rect x="1" y="1" width="18" height="18" rx="1" /></svg></button>
          </div>
        </form>
      </aside>
    </div>

    <footer class="status">
      <span class="ready">Ready</span>
      <button class="access"><svg class="ic" viewBox="0 0 24 24" width="22" height="22"><circle cx="11" cy="3.500" r="2.500" /><path d="M3 6l5 3v5l-3 8M19 6l-5 3v4M8 9h6M11 15l-2 7M15 14l6 8M21 14l-6 8" stroke-width="2" /></svg>Accessibility: Investigate</button>
      <span class="stat">Average: 359.9387097</span>
      <span class="stat">Count: 119</span>
      <span class="stat">Sum: 11158.1</span>
      <button class="view on" aria-label="Normal view"><svg class="ic" viewBox="0 0 20 20" width="20" height="20"><path d="M1 1h18v18H1zM1 7h18M1 13h18M7 1v18M13 1v18" /></svg></button>
      <button class="view" aria-label="Page layout view"><svg class="ic" viewBox="0 0 20 20" width="20" height="20"><path d="M1 1h18v18H1zM5 4h10v12H5zM7 7h6M7 10h6M7 13h6" /></svg></button>
      <button class="view" aria-label="Page break view"><svg class="ic" viewBox="0 0 20 20" width="20" height="20"><path d="M1 1h18v18H1zM7 1v10h7V1" /></svg></button>
      <button class="zoom" aria-label="Zoom out"><svg viewBox="0 0 12 12" width="12" height="12"><path d="M0 6h12" stroke="#eee" stroke-width="2.500" /></svg></button>
      <input type="range" min="0" max="100" value="50" aria-label="Zoom" />
      <button class="zoom" aria-label="Zoom in"><svg viewBox="0 0 12 12" width="12" height="12"><path d="M0 6h12M6 0v12" stroke="#eee" stroke-width="2.500" /></svg></button>
      <span class="percent-label">100%</span>
    </footer>
  </main>
</div>

<style>
  :global(body) { margin: 0; }
  * { box-sizing: border-box; }
  button, input, select, textarea { font: inherit; color: inherit; background: none; border: 0; margin: 0; padding: 0; outline: 0; }
  button { display: inline-flex; align-items: center; justify-content: center; white-space: nowrap; flex: none; }
  svg { flex: none; display: block; fill: none; }

  .page {
    position: relative;
    height: 100vh;
    padding: 105px 103px 104px;
    border-bottom: 3px solid #101510;
    display: flex;
    font-family: Inter, "Liberation Sans", sans-serif;
    font-size: 16px;
    color: #e6e6e6;
    background: linear-gradient(150deg, #b2e5bf 0%, #86b696 22%, #6c9c7c 50%, #4a7a57 76%, #2a5535 100%);
    overflow: hidden;
  }
  .smudge { position: absolute; left: 0; top: 0; }
  .smudge path { fill: #9fb4a4; }
  .window {
    position: relative;
    flex: 1;
    min-width: 0;
    display: flex;
    flex-direction: column;
    background: #2c2d2c;
    box-shadow: 0 32px 90px rgba(4, 38, 14, .75);
  }

  .chev { fill: none; stroke: currentColor; stroke-width: 2; stroke-linecap: round; stroke-linejoin: round; }
  .ic { fill: none; stroke: #d0d0d0; stroke-width: 1.5; }
  .big { fill: none; stroke: #c8c8c8; stroke-width: 1.5; }
  .l2 { stroke-width: 2; }
  .tiny { font-size: 13px; font-weight: 400; fill: #d0d0d0; stroke: none; }

  .titlebar { height: 56px; display: grid; grid-template-columns: 1fr auto 1fr; align-items: center; }
  .quick { display: flex; align-items: center; padding-left: 30px; }
  .quick button { width: 38px; }
  .quick .slim { width: 18px; }
  .quick svg:not(.chev) { stroke: #e6e6e6; stroke-width: 1.6; }
  .autosave { display: flex; align-items: center; font-size: 16px; font-weight: 500; margin-right: 7px; position: relative; }
  .autosave input { appearance: none; width: 38px; height: 18px; border-radius: 9px; background: #1b1c1b; margin-left: 13px; }
  .knob { position: absolute; right: 22px; width: 18px; height: 18px; border-radius: 50%; background: #fff; }
  .doc { display: flex; align-items: center; gap: 5px; font-size: 17px; font-weight: 500; color: #f0f0f0; }
  .doc .chev { color: #a8a8a8; }
  .search { justify-self: end; position: relative; width: 389px; height: 31px; margin-right: 11px; display: flex; align-items: center; gap: 7px; padding-left: 9px; border: 1px solid #3c3d3c; border-radius: 7px; color: #b4b4b4; font-size: 17px; font-weight: 500; }
  .search svg { stroke: #b4b4b4; stroke-width: 1.6; }
  .search input { flex: 1; min-width: 0; }
  .search input::placeholder { color: #b4b4b4; opacity: 1; }
  .dot { position: absolute; right: -5px; top: -6px; width: 9px; height: 9px; border-radius: 50%; background: #7f8fd8; }

  .menu { height: 40px; display: flex; align-items: flex-start; gap: 34px; padding: 0 14px 0 17px; font-size: 18px; font-weight: 500; color: #dcdcdc; }
  .menu > button { position: relative; height: 36px; padding-bottom: 3px; }
  .menu > .active { font-weight: 700; color: #fff; }
  .menu > .active::after { content: ""; position: absolute; left: 0; right: 0; bottom: 0; height: 4px; border-radius: 2px; background: #f0f0f0; }
  .menu-actions { margin-left: auto; display: flex; gap: 15px; padding-top: 2px; }
  .pill { height: 34px; border-radius: 7px; gap: 6px; color: #fff; font-size: 18px; }
  .pill svg:not(.chev) { stroke: #fff; stroke-width: 1.6; }
  .grey { width: 146px; background: #616161; }
  .green { width: 123px; background: #45924f; }

  .ribbon { height: 102px; display: flex; padding-top: 4px; font-size: 16px; font-weight: 500; }
  .group { position: relative; flex: none; padding-top: 7px; }
  .group:not(:last-child)::after { content: ""; position: absolute; right: 0; top: 7px; width: 1px; height: 86px; background: #565756; }
  .g-clip { width: 192px; padding-left: 16px; display: flex; gap: 8px; }
  .g-font { width: 375px; padding-left: 14px; }
  .g-align { width: 230px; padding-left: 14px; }
  .g-wrap { width: 194px; padding-left: 13px; }
  .g-num { width: 245px; padding-left: 14px; }
  .g-style { flex: 1 0 596px; padding-left: 15px; display: flex; }
  .g-cells { width: 235px; padding-left: 13px; display: flex; }
  .g-edit { width: 294px; padding-left: 18px; display: flex; }
  .g-add { width: 89px; padding-left: 5px; }
  .g-tl1 { width: 107px; padding-left: 13px; }
  .g-tl2 { width: 117px; padding-left: 10px; }
  .line { display: flex; align-items: center; height: 34px; }
  .line + .line { margin-top: 11px; }
  .line button { height: 34px; }
  .w16 { width: 16px; } .w22 { width: 22px; } .w34 { width: 34px; } .w36 { width: 36px; } .w38 { width: 38px; }
  .w62 { width: 62px; } .w70 { width: 70px; } .w76 { width: 76px; } .w80 { width: 80px; } .w84 { width: 84px; }
  .w197 { width: 197px; } .w215 { width: 215px; }
  .line .on { background: #585958; border-radius: 5px; }
  .bar { display: block; height: 24px; background: linear-gradient(#565756, #565756) center / 1px 100% no-repeat; }
  .glyph { font-size: 20px; color: #d4d4d4; }
  .b { font-weight: 600; }
  .i { font-style: italic; font-family: "Liberation Serif", serif; font-size: 22px; }
  .u { text-decoration: underline; text-underline-offset: 3px; font-weight: 400; }
  .pct { font-weight: 300; font-size: 24px; }
  .drop { display: grid; align-items: center; height: 33px; margin-right: 2px; background: #3a3b3a; border: 1px solid #4a4b4a; border-radius: 5px; }
  .drop select, .drop svg { grid-area: 1 / 1; }
  .drop select { appearance: none; width: 100%; height: 31px; padding-left: 8px; font-size: 17px; }
  .drop svg { justify-self: end; margin-right: 4px; pointer-events: none; }
  .stack { display: flex; flex-direction: column; align-items: flex-start; margin-top: -6px; width: 122px; }
  .stack button { height: 30px; gap: 7px; }
  .item { height: 34px; gap: 7px; }
  .item + .item { margin-top: 11px; }
  .large { flex-direction: column; justify-content: flex-start; height: 90px; margin-top: -3px; line-height: 17px; text-align: center; }
  .pic { display: flex; align-items: center; gap: 3px; height: 46px; margin-bottom: 4px; }
  .tile { width: 46px; height: 46px; background: #17331f; display: grid; place-items: center; }
  .checker { fill: #f5f5f5; }
  .gallery { flex: 1; display: flex; height: 82px; margin: -6px 15px 0 4px; background: #454645; border: 1px solid #555; border-radius: 5px; }
  .arrow { width: 24px; height: 80px; }
  .swatches { flex: 1; display: grid; grid-template-columns: repeat(3, 1fr); gap: 8px 3px; padding: 8px 0 5px; }
  .swatch { justify-content: flex-start; min-width: 0; padding-left: 5px; background: #fff; color: #111; font-family: "Liberation Sans", sans-serif; font-size: 17px; font-weight: 400; }
  .swatch.small { font-size: 14px; }
  .swatch.chosen { box-shadow: 0 0 0 2px #2c2d2c, 0 0 0 3px #ddd; border-radius: 2px; }
  .swatch.bad { background: #d2d2d2; color: #a83218; }

  .formula { height: 38px; border-top: 2px solid #171817; border-bottom: 1px solid #171817; display: flex; align-items: center; background: #2a2b2a; }
  .namebox { width: 118px; height: 35px; display: flex; align-items: center; border: 1px solid #454645; padding: 0 1px 0 12px; }
  .namebox input { flex: 1; min-width: 0; font-size: 17px; }
  .cancel { width: 59px; }
  .fx { width: 52px; gap: 4px; }
  .fx em { font: italic 24px "Liberation Serif", serif; color: #c4c4c4; }
  .fxinput { flex: 1; min-width: 0; height: 28px; background: #404140; border-radius: 4px; padding-left: 11px; font-size: 17px; color: #fff; }
  .expand { width: 33px; height: 28px; }

  .work { flex: 1; min-height: 0; display: flex; border-top: 4px solid #e6e4e2; }
  .left { flex: 1; min-width: 0; display: flex; flex-direction: column; }
  .sheet { position: relative; flex: 1; min-height: 0; overflow: hidden; background: #fff; }
  table { position: relative; table-layout: fixed; width: 0; border-collapse: separate; border-spacing: 0; color: #161616; font-family: "Liberation Sans", sans-serif; font-size: 14px; background: linear-gradient(#cdcdcd, #cdcdcd) 32px 29px / 1670px 985px no-repeat; }
  .col-num { width: 32px; } .col-a { width: 16px; } .col-b { width: 83px; } .col-c { width: 309px; }
  .col-d { width: 126px; } .col-e { width: 126px; } .col-f { width: 125px; } .col-std { width: 74px; } .col-slim { width: 73px; }
  th { padding: 0; font-family: Inter, sans-serif; font-size: 14px; font-weight: 600; color: #f2f2f2; background: #121312; }
  thead th { height: 29px; padding-bottom: 2px; border-left: 1px solid #4c4d4c; }
  thead th.sel { background: #616361; border-left: 0; }
  thead th.corner { border: 0; padding: 0; }
  tbody th { border-top: 1px solid #4c4d4c; }
  .inside th { background: #616361; border-top-color: #616361; }
  tbody tr { height: 21px; line-height: 18px; }
  tbody .first { height: 22px; }
  tbody .spacer { height: 20px; }
  td { padding: 0 4px; white-space: nowrap; overflow: visible; }
  .bold { font-weight: 700; color: #000; }
  .clip { overflow: hidden; padding-right: 0; }
  .num { text-align: right; }
  .percent { text-align: right; padding-right: 8px; }
  .inside .top-bar { background: #283223; }
  .sheet-title { font-size: 20px; font-weight: 700; color: #e4e6e2; padding-left: 3px; }
  .inside .section { background: #3c4d35; color: #cdd2c9; }
  .inside .band { background: #c3c3c3; }
  .inside .entry { background: #cfcbac; color: #262b93; }
  .box-side { border-left: 1px solid #77787a; border-right: 1px solid #77787a; padding: 0 3px; }
  .box-top { border-top: 1px solid #77787a; }
  .box-bottom { border-bottom: 1px solid #77787a; }
  .box-left { border-left: 1px solid #77787a; }
  .box-right { border-right: 1px solid #77787a; }
  .selection { position: absolute; left: 31px; top: 26px; width: 1673px; height: 989px; border: 2px solid #47794f; box-shadow: inset 0 0 0 1px #eee; }
  .selection span { position: absolute; right: -4px; bottom: -4px; width: 8px; height: 8px; background: #47794f; border: 1px solid #fff; }

  .sheets { flex: none; height: 37px; display: flex; background: #383938; border-top: 1px solid #777; border-bottom: 2px solid #1c1d1c; font-size: 16px; font-weight: 500; padding-left: 10px; font-feature-settings: "calt" 0; }
  .nav { width: 32px; }
  .nav svg { fill: #747474; }
  .tab { height: 34px; padding: 4px; background: #222422; }
  .tab + .tab { border-left: 1px solid #4a4b4a; }
  .tab span { flex: 1; align-self: stretch; display: grid; place-items: center; }
  .nav + .nav { margin-right: 11px; }
  .volume { width: 164px; } .volume span { background: #2f7a3d; color: #fff; }
  .current { width: 116px; height: 30px; background: #fff; color: #44834f; font-weight: 600; }
  .year { width: 110px; } .year span { background: #e2f3d8; color: #161616; }
  .expert { width: 178px; } .expert span { background: #33658f; color: #fff; }
  .plus { width: 52px; border-right: 1px solid #777; height: 29px; margin-top: 2px; }

  .panel { flex: none; width: 489px; border-left: 2px solid #3a3b3a; background: linear-gradient(#fff 94%, #f3f3f3); color: #4d4d4d; display: flex; flex-direction: column; font-size: 19px; }
  .panel-title { height: 37px; padding: 0 22px; display: flex; align-items: center; justify-content: space-between; background: #393939; color: #e2e2e2; }
  h2, h3 { margin: 0; font-weight: 600; font-size: 19px; }
  .pi { fill: none; stroke: currentColor; stroke-width: 1.6; stroke-linecap: round; stroke-linejoin: round; }
  .panel-tabs { height: 46px; border-bottom: 1px solid #e0e0e0; display: flex; align-items: center; padding-left: 10px; }
  .panel-tabs .checker { fill: #111; margin-right: 11px; }
  .picon { width: 39px; color: #808080; }
  .ptab { height: 45px; padding: 0 12px; color: #b3b3b3; font-weight: 500; font-size: 19px; }
  .chat { color: #1a1a1a; border-bottom: 2px solid #6fa57b; }
  .info { width: 36px; height: 37px; margin: 8px 9px 0 auto; border-radius: 6px; background: #7f7f7f; color: #f2f2f2; }
  .info em { font: italic bold 26px "Liberation Serif", serif; }
  .panel-head { height: 51px; display: flex; align-items: center; padding: 0 12px 0 22px; }
  .panel-head h3 { font-weight: 500; flex: 1; color: #4a4a4a; }
  .panel-head .picon { width: 45px; }
  .raw { display: flex; align-items: center; gap: 12px; font-size: 17px; color: #808080; position: relative; margin-right: 10px; }
  .raw input { appearance: none; width: 44px; height: 25px; border-radius: 13px; background: #e6e5e4; }
  .raw span { position: absolute; right: 20px; width: 23px; height: 23px; border-radius: 50%; background: #fff; }
  .prompt { margin: 0 11px; height: 118px; padding: 12px 17px; border: 1px solid #e0e0e0; border-radius: 14px; background: #fbfbfb; line-height: 29px; white-space: nowrap; box-shadow: 0 2px 2px rgba(0, 0, 0, .06); }
  .prompt span { color: #b0b0b0; }
  .chatlog { position: relative; flex: 1; min-height: 0; overflow: hidden; padding: 0 26px 0 27px; }
  .chatlog p { margin: 8px 0 9px; line-height: 29px; white-space: nowrap; }
  .step { height: 32px; line-height: 30px; font-size: 17px; color: #b5b7b6; }
  .tall { height: 38px; line-height: 36px; }
  .edits { margin-top: 3px; }
  .edits span { color: #d8d8d8; }
  .summary { height: 64px; display: flex; align-items: center; gap: 24px; font-style: italic; color: #8c8c8c; font-size: 18px; white-space: nowrap; }
  .summary::before, .summary::after { content: ""; flex: 1; height: 1px; background: #dcdcdc; }
  .thumb { position: absolute; right: 2px; top: 503px; width: 9px; height: 204px; border-radius: 5px; background: #e8e7e6; }
  .todo { position: relative; margin: 0 23px; height: 75px; padding: 4px 0 0 22px; border: 1px solid #e2e2e2; border-bottom: 0; border-radius: 14px 14px 0 0; background: #fff; font-size: 18px; color: #838383; display: grid; grid-template-columns: auto auto; grid-template-rows: 33px 33px; justify-content: space-between; justify-items: start; }
  .todo button { gap: 8px; color: inherit; }
  .todo svg { color: #a0a0a0; }
  .todo button:first-child { grid-column: 1 / 3; }
  kbd { font: inherit; color: #b9b9b9; font-size: 17px; }
  b { font-weight: 600; color: #4a4a4a; }
  .todo .undo { width: 158px; height: 27px; align-self: center; margin-right: 6px; border: 1px solid #eee; border-radius: 8px; color: #d0d0d0; gap: 4px; font-size: 17px; }
  .undo kbd, .todo .undo svg { color: #d0d0d0; }
  .undo kbd { margin-left: 3px; }
  .composer { margin: 0 11px 13px; height: 150px; padding: 9px 9px 0; border: 1px solid #adadad; border-radius: 14px; background: #fff; }
  .chips { display: flex; gap: 12px; }
  .chip { height: 31px; padding: 0 7px; gap: 7px; border: 1px solid #e2e2e2; border-radius: 8px; color: #a5a5a5; font-size: 17px; }
  .chip b { width: 22px; height: 24px; border-radius: 8px; background: #f0f3f1; color: #5b9a6b; display: grid; place-items: center; font-size: 17px; }
  .chip svg { width: 18px; }
  textarea { display: block; width: 100%; height: 30px; line-height: 30px; margin-top: 6px; padding-left: 6px; resize: none; overflow: hidden; font-size: 19px; }
  textarea::placeholder { color: #dadada; opacity: 1; }
  .tools { display: flex; align-items: center; height: 34px; margin-top: 31px; }
  .tools .picon { width: 32px; }
  .control { height: 26px; width: 160px; margin: 0 13px 0 4px; border-radius: 13px; background: #f1f3f2; color: #3d6a72; gap: 7px; font-size: 17px; }
  .model { flex: 1; justify-content: space-between; color: #8a8a8a; font-size: 17px; padding: 0 13px 0 5px; }
  .stop { width: 102px; height: 34px; gap: 8px; border-radius: 9px; background: #38633f; color: #f4f4f4; font-size: 18px; font-weight: 500; }
  .stop svg { stroke: #f4f4f4; stroke-width: 2; }

  .status { height: 31px; display: flex; align-items: center; padding: 0 34px; background: linear-gradient(#535353, #464646); color: #dcdcdc; font-size: 16px; }
  .access { margin: 0 auto 0 26px; gap: 6px; font-size: 17px; }
  .stat { margin-right: 27px; white-space: nowrap; font-size: 17px; }
  .stat:nth-of-type(4) { margin-right: 13px; }
  .view { width: 50px; height: 31px; }
  .view.on { background: #686a68; }
  .zoom { width: 32px; }
  .status input { appearance: none; width: 139px; height: 4px; border-radius: 2px; background: #8a8a8a; }
  .status input::-webkit-slider-thumb { appearance: none; width: 21px; height: 21px; border-radius: 50%; background: #b0b0b0; }
  .percent-label { margin-left: 14px; }
</style>
